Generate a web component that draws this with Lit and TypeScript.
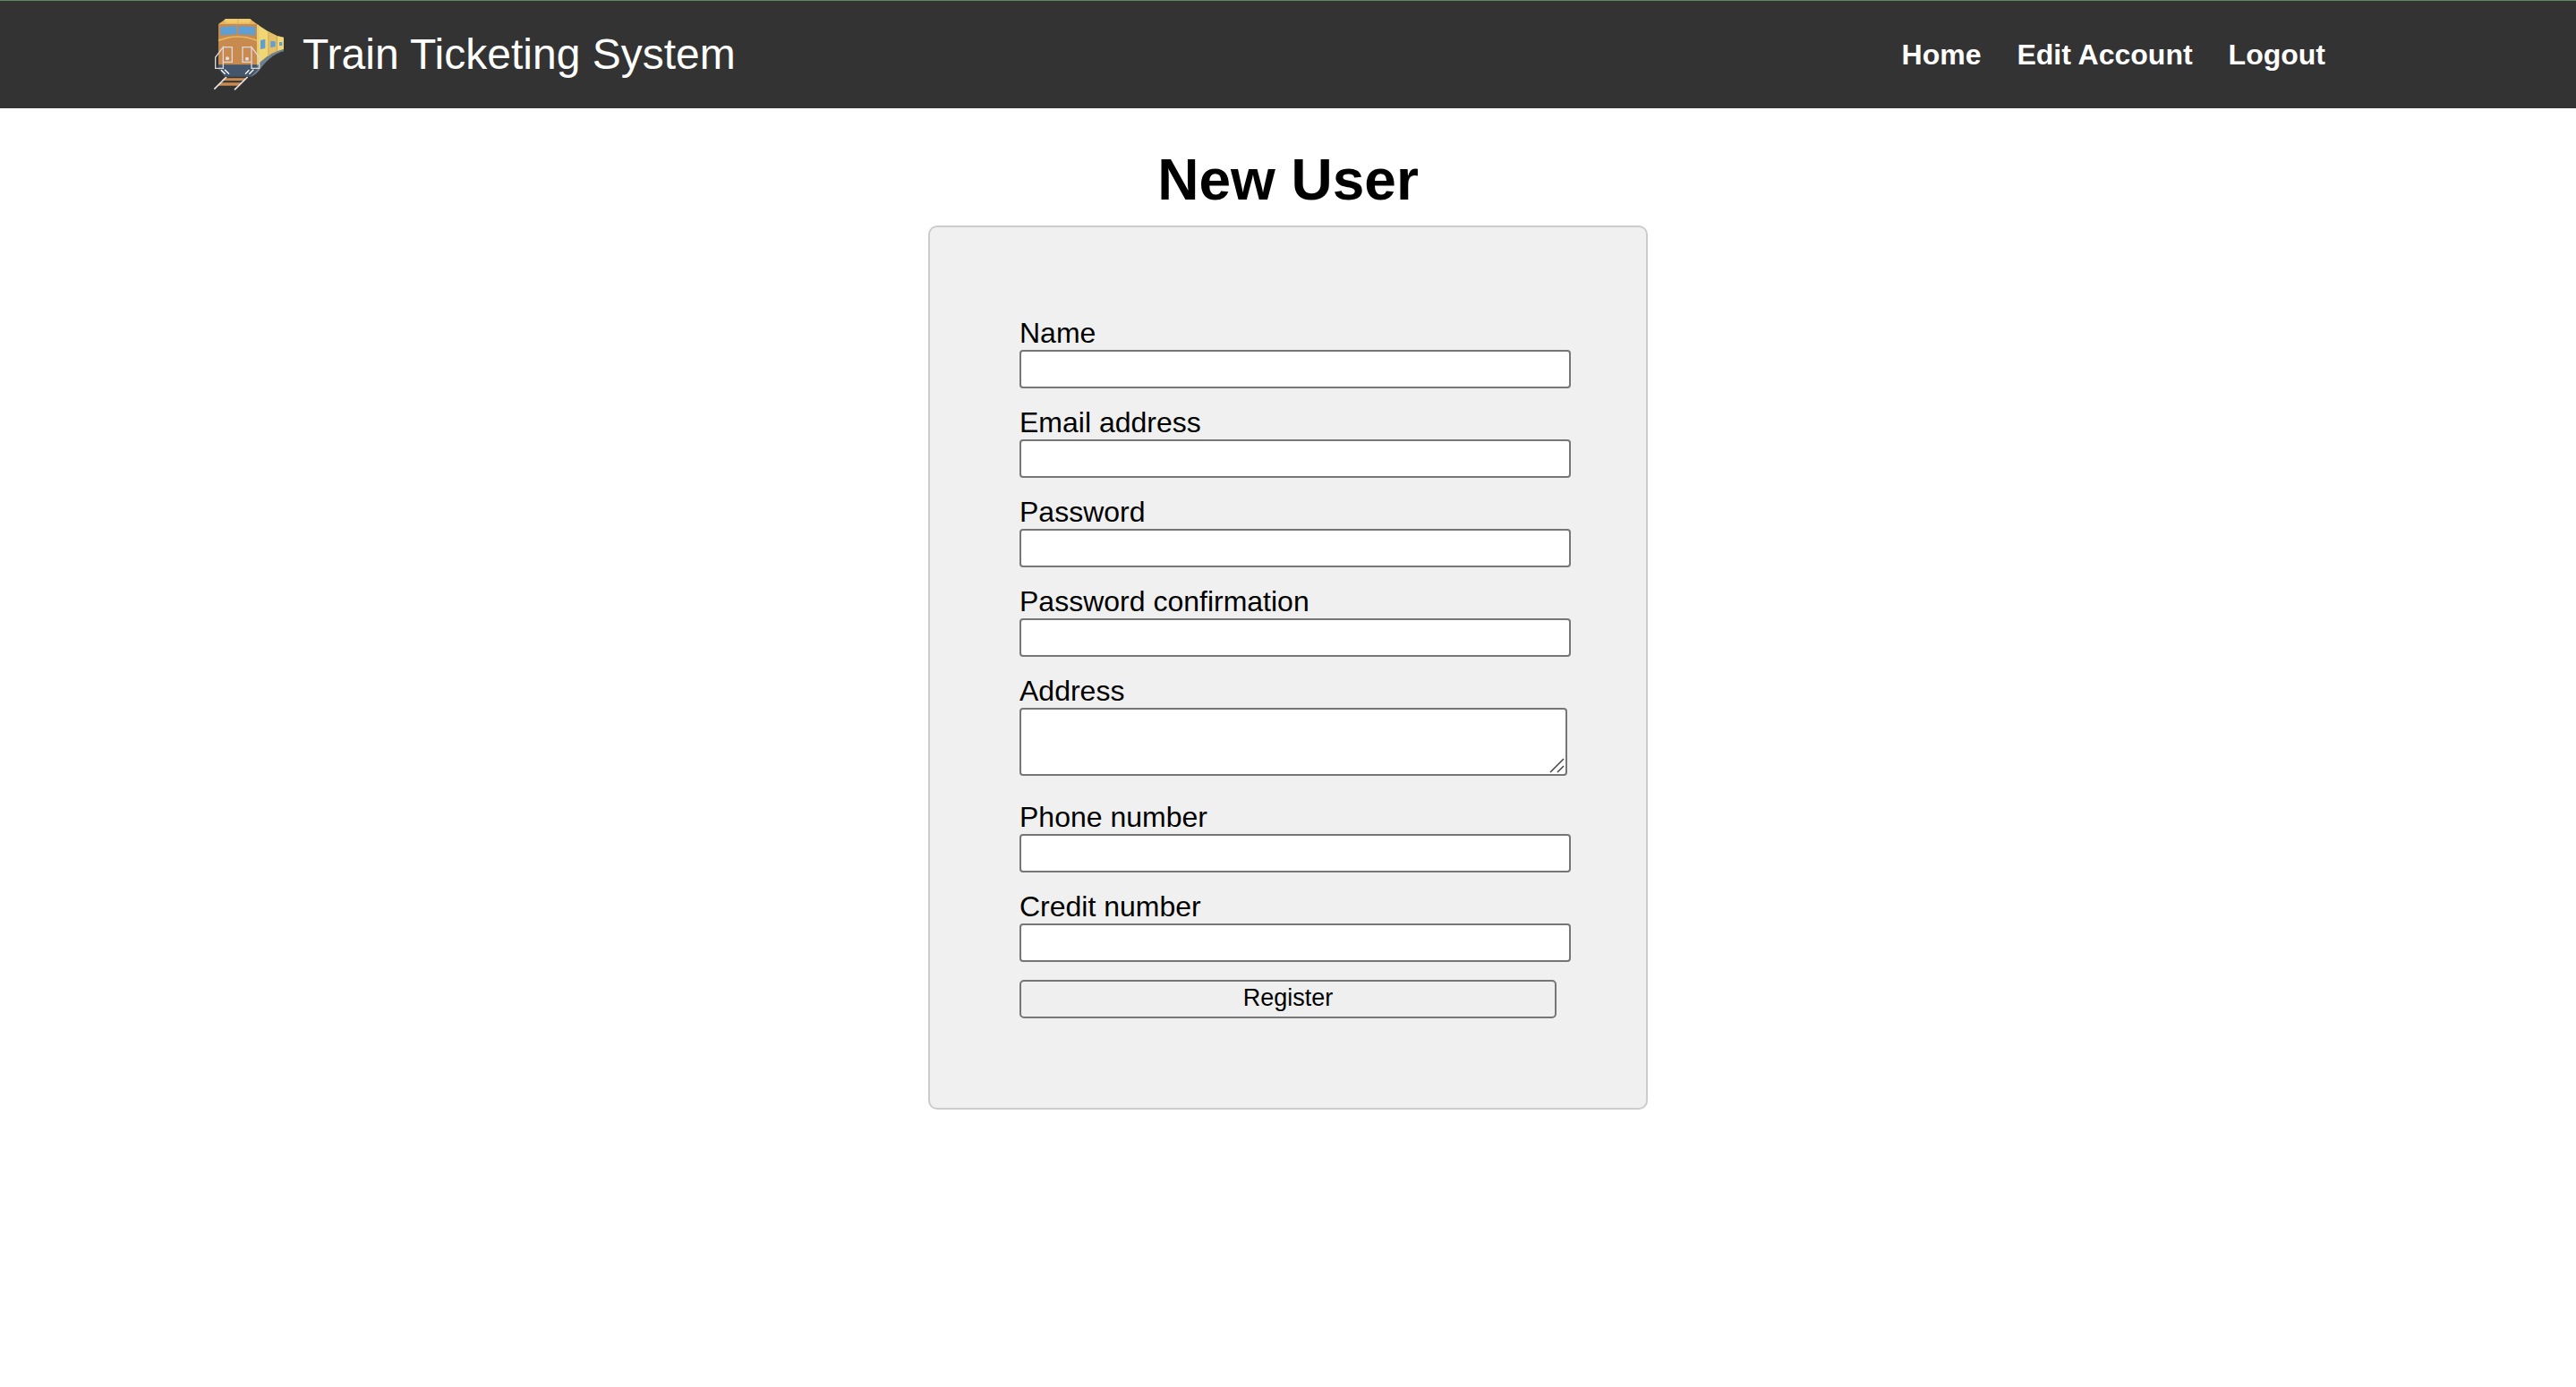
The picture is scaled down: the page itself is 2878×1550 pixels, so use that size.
import { LitElement, html, css } from "lit";
import { customElement } from "lit/decorators.js";

interface Field {
  id: string;
  label: string;
  type: "text" | "email" | "password" | "tel" | "multiline";
}

const FIELDS: Field[] = [
  { id: "name", label: "Name", type: "text" },
  { id: "email", label: "Email address", type: "email" },
  { id: "password", label: "Password", type: "password" },
  { id: "password-confirmation", label: "Password confirmation", type: "password" },
  { id: "address", label: "Address", type: "multiline" },
  { id: "phone", label: "Phone number", type: "tel" },
  { id: "credit", label: "Credit number", type: "text" },
];

const LINKS = ["Home", "Edit Account", "Logout"];

/** Locomotive with a row of carriages behind it, seen from the front left. */
@customElement("train-logo")
export class TrainLogo extends LitElement {
  static styles = css`
    :host {
      display: block;
      flex: none;
      width: 80px;
      height: 80px;
    }
    .drawing {
      display: block;
      width: 100%;
      height: 100%;
      overflow: visible;
    }
  `;

  render() {
    return html`
      <svg class="drawing" viewBox="39 63 240 240" aria-hidden="true" fill="none">
        <!-- rails and sleepers -->
        <path d="M76 262H152L144 271H67ZM62 277H137L129 287H53Z" fill="#c98a50" />
        <path d="M84 258L43 299M155 258L111 301" stroke="#e3e3ea" stroke-width="5" />
        <!-- carriages -->
        <path d="M276 163V172C240 180 215 208 193 237Q184 249 165 258L186 214C215 195 240 172 276 163Z" fill="#6e7f8d" />
        <path d="M186 81L222 104V188L186 217Z" fill="#f1d674" />
        <path d="M222 104L254 120V172Q238 178 222 189Z" fill="#e5c069" />
        <path d="M222 104L228 107V185L222 189Z" fill="#dcb765" />
        <path d="M254 120L276 125V164L254 172Z" fill="#f1d674" />
        <path d="M188 81L193 85V215L186 220Z" fill="#e8cc6e" />
        <path d="M198 135L214 131V162L198 165ZM232 137L248 139V157L232 159ZM261 141H271V153H261Z" fill="#5f9fd4" />
        <!-- cab -->
        <path d="M57 81H186V218H57Z" fill="#c98a50" />
        <path d="M82 63H162L187 81H57Z" fill="#e4b55f" />
        <path d="M82 63H162L168 67L160 77H84L76 67Z" fill="#f0cb6b" />
        <path d="M122 63V78" stroke="#e4b55f" stroke-width="4" />
        <path d="M64 90L118 87V115L64 118ZM124 87L181 90V118L124 115Z" fill="#5f9fd4" />
        <path d="M57 136Q121 110 186 136" stroke="#e8b95c" stroke-width="5" />
        <path d="M57 217H187V235L165 257H78L57 232Z" fill="#43566b" />
        <!-- handrails, lamps and stripes -->
        <path
          d="M73 158H103V208H73ZM73 158L47 192V229H73ZM138 158H168V208H138ZM168 158L194 192V229H168Z"
          stroke="#dcd8da"
          stroke-width="4"
        />
        <circle cx="87" cy="196" r="6" fill="#e3e0e2" />
        <circle cx="153" cy="197" r="6" fill="#e3e0e2" />
        <path
          d="M66 235L80 248M78 233L93 248M160 235L147 248M175 233L160 248"
          stroke="#ffffff"
          stroke-width="4"
        />
      </svg>
    `;
  }
}

@customElement("app-root")
export class AppRoot extends LitElement {
  static styles = css`
    :host {
      display: block;
      min-height: 100vh;
      background: #ffffff;
      color: #000000;
      font-family: "Liberation Sans", Arial, sans-serif;
      font-size: 32px;
      line-height: 37px;
    }
    .header {
      display: flex;
      align-items: center;
      justify-content: space-between;
      padding: 20px 280px 20px 238px;
      border-top: 1px solid #5f8a5f;
      background: #333333;
      color: #ffffff;
    }
    .brand {
      display: flex;
      align-items: center;
      gap: 20px;
      font-size: 48px;
      line-height: 56px;
    }
    .nav {
      display: flex;
      gap: 40px;
    }
    .link {
      color: inherit;
      font-weight: bold;
      text-decoration: none;
    }
    .main {
      display: flex;
      flex-direction: column;
      align-items: center;
      padding: 43px 20px;
    }
    .title {
      margin: 0 0 14px;
      font-size: 64px;
      line-height: 74px;
    }
    .card {
      display: flex;
      flex-direction: column;
      gap: 20px;
      box-sizing: border-box;
      width: 100%;
      max-width: 804px;
      padding: 100px;
      border: 2px solid #cccccc;
      border-radius: 10px;
      background: #f0f0f0;
    }
    .field {
      display: flex;
      flex-direction: column;
    }
    .control {
      display: block;
      box-sizing: border-box;
      width: calc(100% + 16px);
      height: 43px;
      margin: 0;
      padding: 2px 4px;
      border: 2px solid #767676;
      border-radius: 4px;
      background: #ffffff;
      font: inherit;
      font-size: 27px;
      line-height: 31px;
    }
    .area {
      position: relative;
      width: calc(100% + 12px);
      padding-bottom: 8px;
    }
    .area .control {
      width: 100%;
      height: 76px;
      padding: 4px;
      resize: none;
    }
    .grip {
      position: absolute;
      top: 56px;
      right: 3px;
      width: 17px;
      height: 17px;
      pointer-events: none;
    }
    .submit {
      box-sizing: border-box;
      width: 100%;
      height: 43px;
      margin: 0;
      padding: 0 12px 2px;
      border: 2px solid #767676;
      border-radius: 5px;
      background: #efefef;
      color: #000000;
      font: inherit;
      font-size: 27px;
      line-height: 31px;
    }
  `;

  private renderControl(field: Field) {
    if (field.type !== "multiline") {
      return html`<input class="control" id=${field.id} name=${field.id} type=${field.type} />`;
    }
    return html`
      <div class="area">
        <textarea class="control" id=${field.id} name=${field.id}></textarea>
        <svg class="grip" viewBox="0 0 17 17" aria-hidden="true" fill="none" stroke="#444444" stroke-width="1.5">
          <path d="M1 16L16 1M9 16L16 9" />
        </svg>
      </div>
    `;
  }

  render() {
    return html`
      <header class="header">
        <div class="brand"><train-logo></train-logo><span>Train Ticketing System</span></div>
        <nav class="nav">
          ${LINKS.map((link) => html`<a class="link" href="#">${link}</a>`)}
        </nav>
      </header>
      <main class="main">
        <h1 class="title">New User</h1>
        <form class="card" @submit=${(event: Event) => event.preventDefault()}>
          ${FIELDS.map(
            (field) => html`
              <div class="field">
                <label for=${field.id}>${field.label}</label>
                ${this.renderControl(field)}
              </div>
            `
          )}
          <button class="submit" type="submit">Register</button>
        </form>
      </main>
    `;
  }
}
